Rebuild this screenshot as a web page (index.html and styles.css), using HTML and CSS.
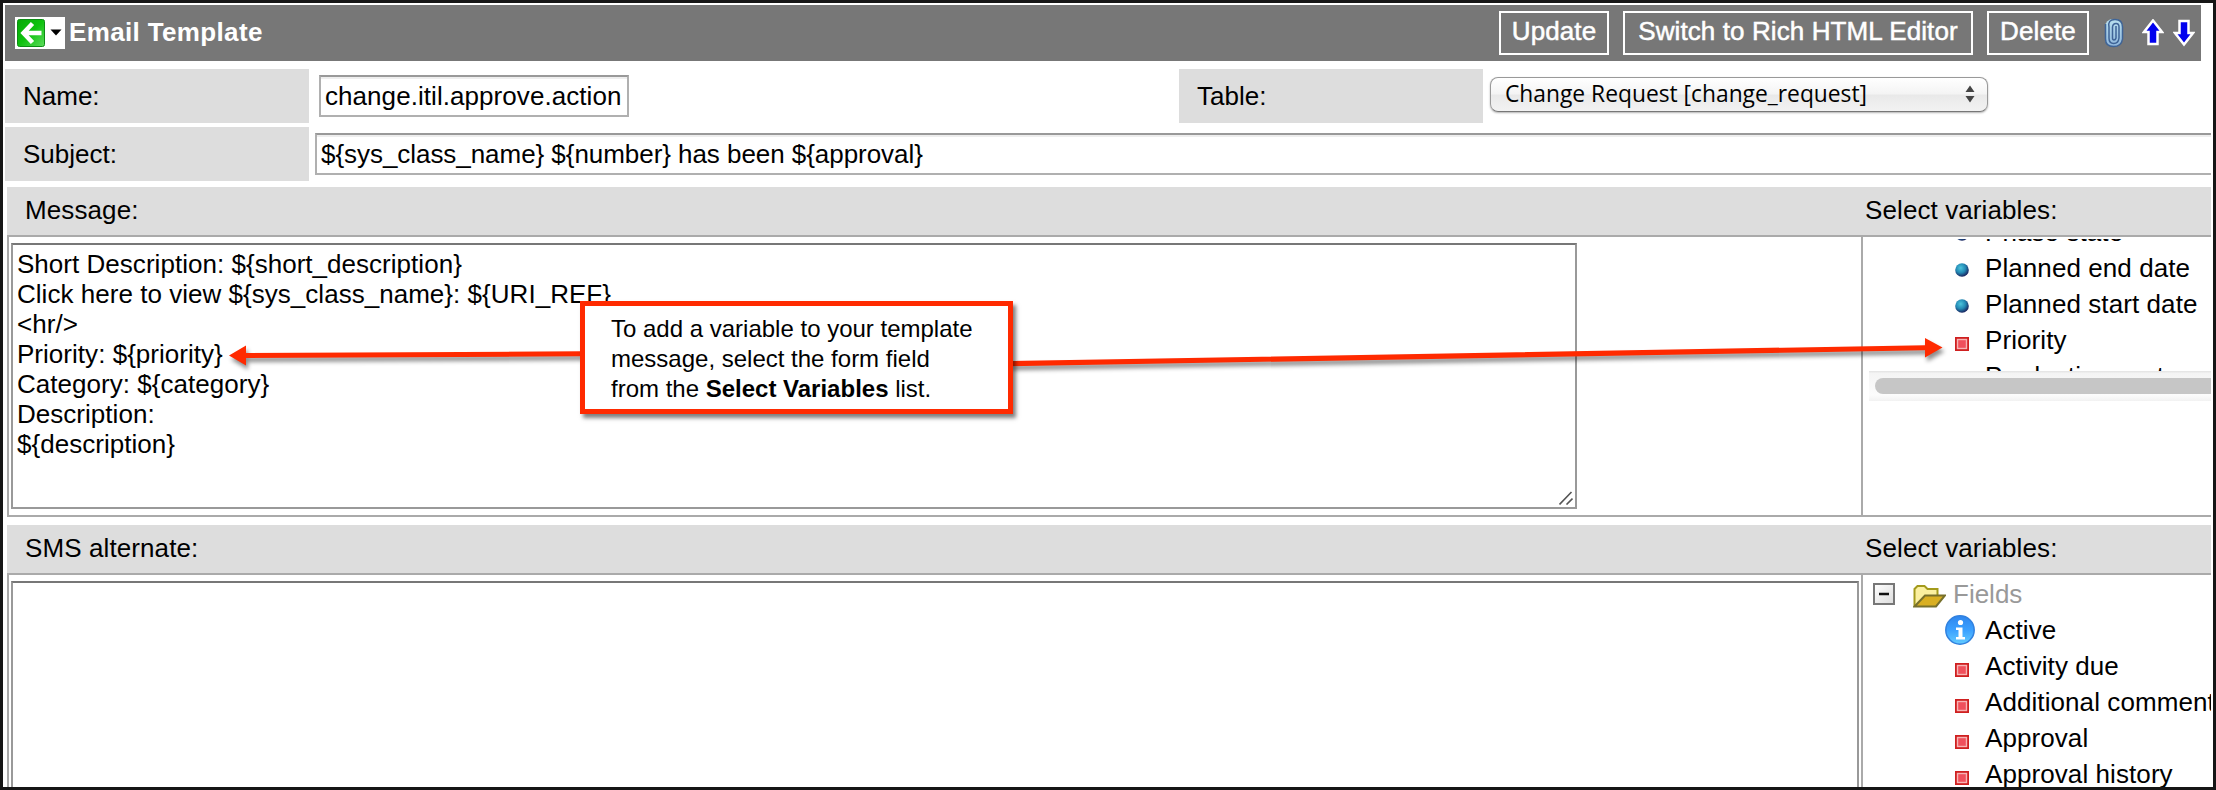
FILE: index.html
```html
<!DOCTYPE html>
<html lang="en">
<head>
<meta charset="utf-8">
<title>Email Template</title>
<link rel="stylesheet" href="styles.css">
</head>
<body>
<svg class="defs" width="0" height="0" aria-hidden="true">
  <defs>
    <linearGradient id="green" x1="0" y1="0" x2="1" y2="1"><stop offset="0" stop-color="#06a806"/><stop offset=".5" stop-color="#0fc20f"/><stop offset="1" stop-color="#5fdc5f"/></linearGradient>
    <radialGradient id="ball" cx=".4" cy=".35" r=".65"><stop offset="0" stop-color="#4cc4dc"/><stop offset=".55" stop-color="#2389b4"/><stop offset="1" stop-color="#1a2560"/></radialGradient>
    <linearGradient id="infoFill" x1="0" y1="0" x2="0" y2="1"><stop offset="0" stop-color="#2f86ee"/><stop offset=".5" stop-color="#3ba0ff"/><stop offset="1" stop-color="#63ccff"/></linearGradient>
    <linearGradient id="clipFill" x1="0" y1="0" x2="0" y2="1"><stop offset="0" stop-color="#b9e0ee"/><stop offset="1" stop-color="#8fb6dc"/></linearGradient>
    <linearGradient id="toggleFill" x1="0" y1="0" x2="1" y2="1"><stop offset="0" stop-color="#fff"/><stop offset="1" stop-color="#dcdcdc"/></linearGradient>
    <symbol id="square" viewBox="0 0 14 14"><rect width="14" height="14" fill="#cf2020"/><rect x="2.5" y="2.5" width="9" height="9" fill="#f0505c" stroke="#f7b4b4" stroke-width="1.4"/></symbol>
    <symbol id="dot" viewBox="0 0 14 14"><circle cx="7" cy="7" r="6.8" fill="url(#ball)"/></symbol>
  </defs>
</svg>
<div class="frame">
  <header class="titlebar">
    <div class="back">
      <svg width="50" height="32" viewBox="0 0 50 32"><rect x="2.5" y="2.5" width="27" height="27" rx="2" fill="url(#green)" stroke="#0c8d14"/><path d="M17.500 6.500L8.500 16l9 9.500M8 16h18.500" fill="none" stroke="#fff" stroke-width="4.500"/><path d="M35.500 12.500h11l-5.500 6z" fill="#000"/></svg>
    </div>
    <h1 class="title">Email Template</h1>
    <div class="actions">
      <button class="btn btn-update">Update</button>
      <button class="btn btn-switch">Switch to Rich HTML Editor</button>
      <button class="btn btn-delete">Delete</button>
    </div>
    <svg class="clip" width="20" height="30" viewBox="0 0 20 30"><rect x="1" y="1" width="17.500" height="27.500" rx="8" fill="url(#clipFill)"/><g fill="none" stroke="#3f6496" stroke-width="1.500"><path d="M1.500 6v15q0 7.500 8 7.500t9-7.500V9q0-7.500-7.500-7.500T5 9v11q0 5.500 4.700 5.500T15 20V9q0-3.500-3-3.500T8.500 9v11q0 2 1.500 2t2-2V8"/></g></svg>
    <svg class="arrow-up" width="22" height="28" viewBox="0 0 22 28"><path d="M11 1.500L20 13h-4.500v12h-9V13H2z" fill="#00e" stroke="#fff" stroke-width="2.500"/></svg>
    <svg class="arrow-down" width="22" height="28" viewBox="0 0 22 28"><path d="M11 25.500L20 14h-4.500V2h-9v12H2z" fill="#00e" stroke="#fff" stroke-width="2.500"/></svg>
  </header>

  <div class="row">
    <label class="label">Name:</label>
    <input class="field field-name" value="change.itil.approve.action">
    <label class="label label-table">Table:</label>
    <div class="select"><span>Change Request [change_request]</span><svg width="10" height="18" viewBox="0 0 10 18"><path d="M.500 7L5 .500 9.500 7zM.500 11h9L5 17.500z" fill="#444"/></svg></div>
  </div>
  <div class="row">
    <label class="label">Subject:</label>
    <input class="field field-subject" value="${sys_class_name} ${number} has been ${approval}">
  </div>

  <section class="block block-message">
    <div class="block-head"><span class="head-main">Message:</span><span>Select variables:</span></div>
    <div class="block-body">
      <div class="editor">
        <textarea class="area area-message" spellcheck="false">Short Description: ${short_description}
Click here to view ${sys_class_name}: ${URI_REF}
&lt;hr/&gt;
Priority: ${priority}
Category: ${category}
Description:
${description}</textarea>
        <svg class="grip" width="14" height="14" viewBox="0 0 14 14"><path d="M.500 13.500L12.500 1M7.500 13.500l6-6" stroke="#555" stroke-width="1.600"/></svg>
      </div>
      <div class="vars">
        <div class="tree-scroll">
          <ul class="tree">
            <li><svg class="bullet"><use href="#dot"/></svg>Phase state</li>
            <li><svg class="bullet"><use href="#dot"/></svg>Planned end date</li>
            <li><svg class="bullet"><use href="#dot"/></svg>Planned start date</li>
            <li><svg class="bullet"><use href="#square"/></svg>Priority</li>
            <li><svg class="bullet"><use href="#dot"/></svg>Production system</li>
          </ul>
        </div>
        <div class="scrollbar"><div class="thumb"></div></div>
      </div>
    </div>
  </section>

  <section class="block block-sms">
    <div class="block-head"><span class="head-main">SMS alternate:</span><span>Select variables:</span></div>
    <div class="block-body">
      <div class="editor"><textarea class="area area-sms"></textarea></div>
      <div class="vars">
        <div class="root">
          <svg width="22" height="22" viewBox="0 0 22 22"><rect x="1" y="1" width="20" height="20" fill="url(#toggleFill)" stroke="#777" stroke-width="2"/><path d="M6 11h10" stroke="#111" stroke-width="2.500"/></svg>
          <svg class="folder" width="33" height="24" viewBox="0 0 33 24"><path d="M1.500 22V5l3-3h7l3 3h10v6" fill="#fbf0a0" stroke="#a39a1c" stroke-width="2"/><path d="M1.500 22.500L12 11.500h20L23 22.500z" fill="#d9af22" stroke="#77702c" stroke-width="2"/></svg>
          <span>Fields</span>
        </div>
        <ul class="tree">
          <li><svg class="info" viewBox="0 0 30 30"><circle cx="15" cy="15" r="14.200" fill="url(#infoFill)" stroke="#3181df" stroke-width="1.500"/><circle cx="15.500" cy="7.500" r="2.600" fill="#fff"/><path d="M11 12.500h6.500V22H20v2.500h-9V22h2.500v-7H11z" fill="#fff"/></svg>Active</li>
          <li><svg class="bullet"><use href="#square"/></svg>Activity due</li>
          <li><svg class="bullet"><use href="#square"/></svg>Additional comments</li>
          <li><svg class="bullet"><use href="#square"/></svg>Approval</li>
          <li><svg class="bullet"><use href="#square"/></svg>Approval history</li>
        </ul>
      </div>
    </div>
  </section>

  <svg class="pointers" width="2216" height="790" viewBox="0 0 2216 790"><g fill="#ff2a00"><path d="M582 351.300L246 353v-7.500L229 355.500l17 10V358l336-1.700z"/><path d="M1010 361l915-15.800V338l17.500 9.500-17.500 10v-7.300L1010 366.300z"/></g></svg>
  <div class="callout">To add a variable to your template<br>message, select the form field<br>from the <b>Select Variables</b> list.</div>
</div>
</body>
</html>
```

FILE: styles.css
```css
* { box-sizing: border-box; }

body {
  margin: 0;
  font: 26px/30px "Liberation Sans", Arial, sans-serif;
  color: #000;
  background: #fff;
}

.defs { position: absolute; }
svg { display: block; flex: none; }

.frame {
  position: relative;
  width: 2216px;
  height: 790px;
  overflow: hidden;
  border: 3px solid #161616;
  padding: 2px 2px 0;
  background: #fff;
}

.titlebar {
  display: flex;
  align-items: flex-start;
  width: 2196px;
  height: 56px;
  padding: 6px 0 0 10px;
  margin-bottom: 8px;
  background: #777;
  color: #fff;
}
.back { width: 50px; height: 32px; margin-top: 6px; background: #fff; }
.title { margin: 6px 0 0 4px; font-size: 26px; line-height: 30px; font-weight: bold; letter-spacing: .35px; }
.actions { display: flex; gap: 14px; margin-left: auto; }
.btn {
  height: 44px;
  padding: 0 0 4px;
  border: 2px solid #fff;
  background: transparent;
  color: #fff;
  font: inherit;
  letter-spacing: .1px;
  -webkit-text-stroke: .5px #fff;
}
.btn-update { width: 110px; }
.btn-switch { width: 350px; }
.btn-delete { width: 102px; }
.clip { margin: 7px 0 0 15px; }
.arrow-up { margin: 8px 0 0 18px; }
.arrow-down { margin: 8px 6px 0 9px; }

.row { display: flex; align-items: flex-start; height: 54px; margin-bottom: 4px; }
.label { flex: none; width: 304px; height: 54px; padding: 12px 18px; background: #ddd; }
.label-table { margin-left: 550px; }
.field {
  height: 42px;
  padding: 0 0 0 4px;
  border: 2px solid #b0b0b0;
  border-top-color: #999;
  box-shadow: inset 0 2px 0 #eee;
  background: #fff;
  font: inherit;
  color: #000;
  outline: 0;
}
.field-name { width: 310px; margin: 6px 0 0 10px; letter-spacing: .06px; }
.field-subject { width: 1896px; margin: 6px 0 0 6px; border-right: 0; flex: none; letter-spacing: -.05px; }
.select {
  display: flex;
  align-items: center;
  justify-content: space-between;
  width: 498px;
  height: 35px;
  margin: 8px 0 0 7px;
  padding: 0 12px 1px 14px;
  border: 1px solid #999;
  border-bottom-color: #777;
  border-radius: 8px;
  box-shadow: 0 1px 2px rgba(0, 0, 0, .3);
  background: linear-gradient(#fff, #f4f4f4 48%, #e9e9e9 52%, #f2f2f2);
  font: 22.800px/30px "Open Sans", "Noto Sans", sans-serif;
}

.block { width: 2206px; padding-left: 2px; }
.block-message { margin-top: 2px; padding-top: 2px; height: 340px; }
.block-head {
  display: flex;
  height: 48px;
  padding: 8px 0 0 18px;
  background: #ddd;
  letter-spacing: .1px;
}
.head-main { width: 1840px; }
.block-body {
  display: flex;
  border: 2px solid #aaa;
  border-right: 0;
}
.block-message .block-body { height: 282px; }
.block-sms .block-body { height: 260px; }
.editor { position: relative; width: 1854px; padding: 6px 2px; border-right: 2px solid #aaa; flex: none; }
.area {
  display: block;
  padding: 4px;
  border: 2px solid #999;
  border-top-color: #777;
  background: #fff;
  font: inherit;
  color: #000;
  resize: none;
  outline: 0;
  overflow: hidden;
}
.area-message { width: 1566px; height: 266px; letter-spacing: .03px; }
.area-sms { width: 1848px; height: 240px; }
.grip { position: absolute; left: 1550px; top: 254px; }

.vars { flex: 1; min-width: 0; overflow: hidden; }
.tree { margin: 0; padding: 0; list-style: none; letter-spacing: .08px; }
.tree li {
  display: flex;
  height: 36px;
  padding-left: 92px;
  line-height: 36px;
  white-space: nowrap;
}
.bullet { width: 14px; height: 14px; margin: 15px 16px 0 0; }
.tree li .bullet:has([href="#dot"]) { margin-top: 13px; }
.info { width: 30px; height: 30px; margin: 3px 10px 0 -10px; }
.tree-scroll { height: 132px; margin-top: 2px; overflow: hidden; }
.tree-scroll .tree { margin-top: -25px; }
.scrollbar {
  height: 30px;
  margin-left: 6px;
  padding: 7px 0 0 6px;
  background: linear-gradient(#e2e2e2, #f4f4f4 8%, #fcfcfc 80%, #f2f2f2);
}
.thumb { height: 16px; border-radius: 8px 0 0 8px; background: #c6c6c6; }
.root {
  display: flex;
  height: 36px;
  margin-top: 1px;
  padding: 7px 0 0 10px;
  color: #999;
}
.root span { margin: -4px 0 0 7px; }
.folder { margin: 1px 0 0 18px; }

.pointers { position: absolute; left: -3px; top: -3px; filter: drop-shadow(2px 4px 2px rgba(0, 0, 0, .45)); }
.callout {
  position: absolute;
  left: 577px;
  top: 298px;
  width: 433px;
  height: 113px;
  padding: 8px 0 0 26px;
  border: 5px solid #ff2a00;
  box-shadow: 3px 4px 4px rgba(0, 0, 0, .5);
  background: #fff;
  font-size: 24px;
  white-space: nowrap;
}
```
